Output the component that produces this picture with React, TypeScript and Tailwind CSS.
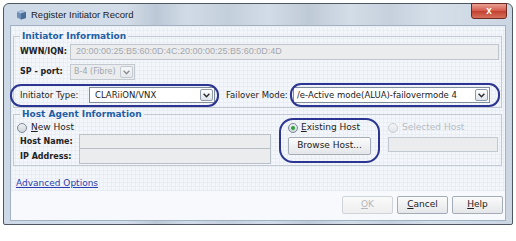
import React from "react";

const Chevron = ({ color = "#2b2b2b" }: { color?: string }) => (
  <svg width="7" height="5" viewBox="0 0 7 5">
    <path d="M0.6 0.8 L3.5 3.8 L6.4 0.8" fill="none" stroke={color} strokeWidth="1.4" />
  </svg>
);

const DropBtn = ({ disabled }: { disabled?: boolean }) => (
  <div
    className={
      "w-[13px] h-[12px] mr-[1px] rounded-[2px] border flex items-center justify-center shrink-0 " +
      (disabled
        ? "border-[#c3c9d0] bg-[linear-gradient(#f6f7f8,#e6e9ec)]"
        : "border-[#8f9cab] bg-[linear-gradient(#ffffff,#dfe5ec)]")
    }
  >
    <Chevron color={disabled ? "#8a8f96" : "#2b2b2b"} />
  </div>
);

const Radio = ({ checked, disabled }: { checked?: boolean; disabled?: boolean }) => (
  <div
    className={
      "w-[10px] h-[10px] rounded-full border flex items-center justify-center shrink-0 " +
      (disabled
        ? "border-[#c9cfd6] bg-[linear-gradient(#f4f5f7,#e2e5e9)]"
        : "border-[#7d8996] bg-[linear-gradient(#eef0f3,#cfd5dc)]")
    }
  >
    {checked && <div className="w-[4px] h-[4px] rounded-full bg-[#2aa03a]" />}
  </div>
);

const Btn = ({ children, disabled, w }: { children: React.ReactNode; disabled?: boolean; w: string }) => (
  <div
    className={
      w +
      " h-[18px] rounded-[2px] border flex items-center justify-center text-[9px] " +
      (disabled
        ? "border-[#cfd4da] bg-[linear-gradient(#fafafa,#eeeeee)] text-[#b4b8bd]"
        : "border-[#a4adb7] bg-[linear-gradient(#fbfbfb,#e4e6e9)] text-[#1c1c1c]")
    }
  >
    {children}
  </div>
);

export default function App() {
  return (
    <div className="relative w-[516px] h-[241px] bg-white overflow-hidden font-['DejaVu_Sans',sans-serif]">
      {/* window */}
      <div className="ml-[3px] mt-[3px] w-[510px] h-[222px] flex flex-col border border-[#4d5864] rounded-t-[6px] rounded-b-[2px] px-[6px] pb-[3px] bg-[linear-gradient(90deg,#cdd9e6_0%,#d3dde9_24%,#bcc8d6_30%,#d1dbe7_36%,#c4cfdc_44%,#d2dce8_52%,#bfcad7_60%,#d3dde8_68%,#c6d1dd_76%,#d5dfea_84%,#cbd6e2_100%)]">
        {/* title bar */}
        <div className="h-[21px] flex items-start">
          <div className="mt-[5px] ml-[6px] w-[11px] h-[11px]">
            <svg width="11" height="11" viewBox="0 0 11 11">
              <path d="M1 3 L6 1 L10 3 L10 9 L5 10.5 L1 8.5 Z" fill="#6f8fb8" />
              <path d="M1 3 L5 4.6 L10 3 L6 1 Z" fill="#a9c0dc" />
              <path d="M5 4.6 L5 10.5 L10 9 L10 3 Z" fill="#4a6c98" />
            </svg>
          </div>
          <div className="ml-[4px] mt-[5px] text-[9.5px] leading-[12px] text-[#1b1b1b] font-['Liberation_Sans',sans-serif]">
            Register Initiator Record
          </div>
          <div className="ml-auto -mr-[1px] -mt-[1px] w-[36px] h-[16px] rounded-b-[3px] border border-[#6e2a22] bg-[linear-gradient(#e9a196,#d4584a_50%,#c2402f_51%,#d7705d)] flex items-center justify-center">
            <span className="text-white text-[10px] font-bold leading-none font-['Liberation_Sans',sans-serif] -mt-[1px]">x</span>
          </div>
        </div>

        {/* content */}
        <div className="flex-1 flex flex-col border border-[#a3b2c3] bg-[#f3f6fa] bg-[linear-gradient(to_right,#e9eef5_1px,transparent_1px),linear-gradient(to_bottom,#e9eef5_1px,transparent_1px)] bg-[size:4px_4px]">
          {/* Initiator Information */}
          <fieldset className="mt-[5px] ml-[2px] w-[489px] border border-[#c2c9d2] pl-[6px] pr-[2px] pb-[4px]">
            <legend className="px-[2px] h-[11px] leading-[11px] text-[9px] font-bold text-[#1f5ea6]">
              Initiator Information
            </legend>
            <div className="mt-[2px] h-[16px] flex items-center">
              <div className="w-[50px] text-[8px] font-bold text-[#222]">WWN/IQN:</div>
              <div className="w-[429px] h-[16px] border border-[#c0c6cd] bg-[#ebecee] flex items-center pl-[5px] text-[9px] text-[#a3a7ad] font-['Liberation_Sans',sans-serif]">
                20:00:00:25:B5:60:0D:4C:20:00:00:25:B5:60:0D:4D
              </div>
            </div>
            <div className="mt-[4px] h-[16px] flex items-center">
              <div className="w-[50px] text-[8px] font-bold text-[#222]">SP - port:</div>
              <div className="w-[65px] h-[16px] border border-[#c3c9d0] bg-[#ebecee] flex items-center">
                <div className="flex-1 pl-[3px] text-[8px] text-[#a3a7ad] whitespace-nowrap">B-4 (Fibre)</div>
                <DropBtn disabled />
              </div>
            </div>
            <div className="mt-[7px] h-[16px] flex items-center">
              <div className="w-[69px] text-[8.5px] text-[#1e1e1e]">Initiator Type:</div>
              <div className="w-[126px] h-[16px] border border-[#7e8c9b] bg-white flex items-center">
                <div className="flex-1 pl-[5px] text-[8.5px] text-[#1a1a1a]">CLARiiON/VNX</div>
                <DropBtn />
              </div>
              <div className="ml-[11px] w-[67px] text-[8.5px] text-[#1e1e1e] whitespace-nowrap">Failover Mode:</div>
              <div className="w-[197px] h-[16px] border border-[#7e8c9b] bg-white flex items-center overflow-hidden">
                <div className="flex-1 pl-[3px] text-[8.5px] text-[#1a1a1a] whitespace-nowrap overflow-hidden">
                  /e-Active mode(ALUA)-failovermode 4
                </div>
                <DropBtn />
              </div>
            </div>
          </fieldset>

          {/* Host Agent Information */}
          <fieldset className="mt-[1px] ml-[2px] w-[489px] border border-[#c2c9d2] pl-[6px] pr-[2px] pb-[1px]">
            <legend className="px-[2px] h-[11px] leading-[11px] text-[9px] font-bold text-[#1f5ea6]">
              Host Agent Information
            </legend>
            <div className="flex">
              <div className="w-[251px] flex flex-col">
                <div className="mt-[2px] h-[12px] flex items-center -ml-[3px]">
                  <Radio />
                  <span className="ml-[4px] text-[9px] text-[#1e1e1e]">
                    <span className="underline">N</span>ew Host
                  </span>
                </div>
                <div className="h-[15px] flex items-center">
                  <div className="w-[59px] text-[8px] font-bold text-[#222]">Host Name:</div>
                  <div className="w-[192px] h-[15px] border border-[#b9c0c8] bg-[#ebecee]" />
                </div>
                <div className="h-[15px] flex items-center">
                  <div className="w-[59px] text-[8px] font-bold text-[#222]">IP Address:</div>
                  <div className="w-[192px] h-[15px] border border-t-0 border-[#b9c0c8] bg-[#ebecee]" />
                </div>
              </div>
              <div className="ml-[17px] w-[83px] flex flex-col">
                <div className="mt-[2px] h-[12px] flex items-center">
                  <Radio checked />
                  <span className="ml-[3px] text-[9px] text-[#1e1e1e]">
                    <span className="underline">E</span>xisting Host
                  </span>
                </div>
                <div className="mt-[3px]">
                  <Btn w="w-[83px]">Browse Host...</Btn>
                </div>
              </div>
              <div className="ml-[17px] w-[110px] flex flex-col">
                <div className="mt-[2px] h-[12px] flex items-center">
                  <Radio disabled />
                  <span className="ml-[4px] text-[9px] text-[#b7bcc2]">Selected Host</span>
                </div>
                <div className="mt-[3px] w-[110px] h-[15px] border border-[#c3c9d0] bg-[#ebecee]" />
              </div>
            </div>
          </fieldset>

          <div className="mt-[12px] ml-[5px] h-[11px] leading-[11px] text-[9px] text-[#2b3db0] underline">
            Advanced Options
          </div>

          <div className="mt-[1px] flex-1 border-t border-[#e6ebf1] bg-[#f7f9fc] flex justify-end items-start pt-[5px] pr-[2px] gap-[4px]">
            <Btn w="w-[51px]" disabled>
              <span className="underline">O</span>K
            </Btn>
            <Btn w="w-[51px]">
              <span className="underline">C</span>ancel
            </Btn>
            <Btn w="w-[51px]">
              <span className="underline">H</span>elp
            </Btn>
          </div>
        </div>
      </div>

      {/* highlight ovals */}
      <div className="absolute left-[10px] top-[84px] w-[209px] h-[23px] rounded-[11px] border-2 border-[#2c3592]" />
      <div className="absolute left-[290px] top-[83px] w-[210px] h-[24px] rounded-[11px] border-2 border-[#2c3592]" />
      <div className="absolute left-[279px] top-[118px] w-[101px] h-[45px] rounded-[14px] border-2 border-[#2c3592]" />
    </div>
  );
}
